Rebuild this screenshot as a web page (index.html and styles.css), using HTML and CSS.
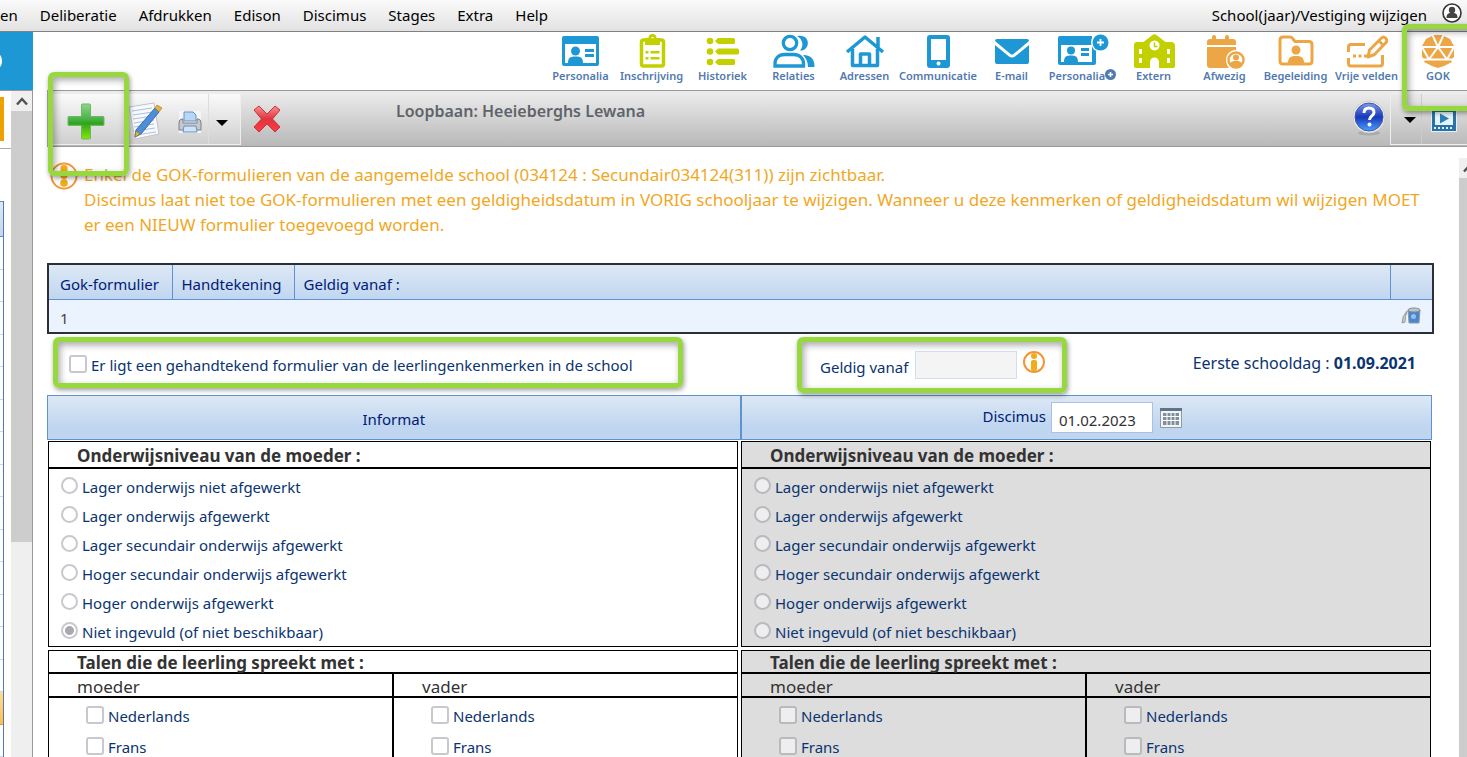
FILE: index.html
```html
<!DOCTYPE html>
<html lang="nl">
<head>
  <meta charset="UTF-8" />
  <meta name="viewport" content="width=device-width, initial-scale=1.0" />
  <title>Loopbaan - GOK</title>
  <link rel="stylesheet" href="styles.css">
</head>
<body>
  <header class="menubar">
    <nav class="menu">
      <a href="#">en</a>
      <a href="#">Deliberatie</a>
      <a href="#">Afdrukken</a>
      <a href="#">Edison</a>
      <a href="#">Discimus</a>
      <a href="#">Stages</a>
      <a href="#">Extra</a>
      <a href="#">Help</a>
    </nav>
    <a href="#" class="school">School(jaar)/Vestiging wijzigen</a>
    <a href="#" class="user" aria-label="Gebruiker">
      <svg width="22" height="22" viewBox="0 0 22 22"><circle cx="11" cy="11" r="9" fill="#fff" stroke="#333" stroke-width="1.6"/><circle cx="11" cy="8" r="3.2" fill="#444"/><path d="M5.5 16c0-5 2.500-5 5.500-5s5.500 0 5.500 5z" fill="#444"/></svg>
    </a>
  </header>

  <div class="app">
    <aside class="side">
      <div class="side-head"><svg width="4" height="16" viewBox="0 0 4 16"><ellipse cx="-2" cy="8" rx="4" ry="7" fill="#fff"/></svg></div>
      <div class="side-body">
        <div class="side-list">
          <div class="side-top"><div class="side-tag"></div></div>
          <div class="rows">
            <div class="row head"></div>
            <div class="row"></div><div class="row"></div><div class="row"></div><div class="row"></div>
            <div class="row"></div><div class="row"></div><div class="row"></div><div class="row"></div>
            <div class="row"></div><div class="row"></div><div class="row"></div><div class="row"></div>
            <div class="row"></div><div class="row"></div>
            <div class="row selected"></div>
            <div class="row"></div>
          </div>
        </div>
        <div class="scroll">
          <div class="scroll-up"><svg width="12" height="9" viewBox="0 0 12 9"><path d="M1 7.500L6 2l5 5.500" fill="none" stroke="#505050" stroke-width="2.400"/></svg></div>
          <div class="scroll-thumb"></div>
        </div>
      </div>
    </aside>

    <main class="main">
      <nav class="tabs">
        <a href="#" class="tab blue">
          <svg width="42" height="36" viewBox="0 0 42 36"><path fill="currentColor" fill-rule="evenodd" d="M4 3h33a2 2 0 0 1 2 2v26a2 2 0 0 1-2 2H4a2 2 0 0 1-2-2V5a2 2 0 0 1 2-2zM5 11v19h31V11z"/><circle cx="15.500" cy="18" r="4.500" fill="currentColor"/><path fill="currentColor" d="M8 30c0-6 3-6.500 7.500-6.500S23 24 23 30zM25 16h9v3h-9zM25 21h9v3h-9z"/></svg>
          <span>Personalia</span></a>
        <a href="#" class="tab lime">
          <svg width="42" height="36" viewBox="0 0 42 36"><rect x="10.500" y="7" width="22" height="26" rx="2" fill="none" stroke="currentColor" stroke-width="3.500"/><path fill="currentColor" fill-rule="evenodd" d="M14 5h3.500a4 4 0 0 1 8 0H29v7H14zM21.500 4a1.500 1.500 0 1 0 .1 0z"/><path fill="currentColor" d="M14.500 18h3v2.500h-3zM19.500 18h9v2.500h-9zM14.500 24h3v2.500h-3zM19.500 24h9v2.500h-9z"/></svg>
          <span>Inschrijving</span></a>
        <a href="#" class="tab lime">
          <svg width="42" height="36" viewBox="0 0 42 36"><g fill="currentColor"><circle cx="8" cy="8" r="3.300"/><circle cx="8" cy="18.500" r="3.300"/><circle cx="8" cy="29" r="3.300"/><path d="M16 5h15.500a1.500 1.500 0 0 1 1.500 1.500v3a1.500 1.500 0 0 1-1.500 1.500H16l-3-3zM16 15.500h19.500a1.500 1.500 0 0 1 1.500 1.500v3a1.500 1.500 0 0 1-1.500 1.500H16l-3-3zM16 26h15.500a1.500 1.500 0 0 1 1.500 1.500v3a1.500 1.500 0 0 1-1.500 1.500H16l-3-3z"/></g></svg>
          <span>Historiek</span></a>
        <a href="#" class="tab blue">
          <svg width="42" height="36" viewBox="0 0 42 36"><path fill="currentColor" d="M24 3c14-3 14 15 3 14.500 4-4.500 3-11-3-14.500zM30 22c9 0 11.500 5 11.500 12H35c0-5-2-9-5-12z"/><g fill="none" stroke="currentColor" stroke-width="3.300"><circle cx="17" cy="10" r="6.700"/><path d="M2 33v-2c0-6 4-9.500 9.500-9.500h9c6 0 10 3.500 10 9.500v2z"/></g></svg>
          <span>Relaties</span></a>
        <a href="#" class="tab blue">
          <svg width="42" height="36" viewBox="0 0 42 36"><g fill="none" stroke="currentColor" stroke-width="3.500" stroke-linejoin="round"><path d="M3 19L21 4l18 15M34 14V4"/><path d="M8.500 16v16.500h25V16M16.500 32V21h9v11"/></g></svg>
          <span>Adressen</span></a>
        <a href="#" class="tab wide blue">
          <svg width="42" height="36" viewBox="0 0 42 36"><path fill="currentColor" fill-rule="evenodd" d="M13 2h17a3 3 0 0 1 3 3v27a3 3 0 0 1-3 3H13a3 3 0 0 1-3-3V5a3 3 0 0 1 3-3zm1 4v21h15V6zm7.500 22.500a2 2 0 1 0 .1 0z"/></svg>
          <span>Communicatie</span></a>
        <a href="#" class="tab blue">
          <svg width="42" height="36" viewBox="0 0 42 36"><path fill="currentColor" d="M6 6h30a2 2 0 0 1 2 2L22.500 21q-1.500 1-3 0L4 8a2 2 0 0 1 2-2zM4 12l14 11.500q3 2 6 0L38 12v17a2 2 0 0 1-2 2H6a2 2 0 0 1-2-2z"/></svg>
          <span>E-mail</span></a>
        <a href="#" class="tab blue">
          <svg width="52" height="36" viewBox="0 0 52 36"><path fill="currentColor" fill-rule="evenodd" d="M3 3h32v8h4v19a2 2 0 0 1-2 2H3a2 2 0 0 1-2-2V5a2 2 0 0 1 2-2zM4 12v17h31V12z"/><circle cx="14" cy="17.500" r="4" fill="currentColor"/><path fill="currentColor" d="M7 29c0-6 3-6.500 7-6.500s7 .5 7 6.500zM24 15h8v3h-8zM24 20h8v3h-8z"/><circle cx="43.500" cy="9.500" r="9.500" fill="#fff"/><circle cx="43.500" cy="9.500" r="8" fill="currentColor"/><path d="M43.500 6v7M40 9.500h7" stroke="#fff" stroke-width="1.800"/></svg>
          <span>Personalia<svg class="sup" width="11" height="11" viewBox="0 0 11 11"><circle cx="5.500" cy="5.500" r="5.500" fill="#5279b0"/><path d="M5.500 3v5M3 5.500h5" stroke="#fff" stroke-width="1.500"/></svg></span></a>
        <a href="#" class="tab lime">
          <svg width="42" height="36" viewBox="0 0 42 36"><path fill="currentColor" fill-rule="evenodd" d="M4 9h6.500l9-7q2-1.500 4 0l9 7H38q4 0 4 4v20q0 2-2 2H26v-6a4.500 4.500 0 0 0-9 0v6H3q-2 0-2-2V12q0-3 3-3zM6 16v5h3v-5zm0 9v5h3v-5zm28-9v5h3v-5zm0 9v5h3v-5zM21.500 7.500a5 5 0 1 0 .1 0z"/><path d="M21.500 9.500v4h3" stroke="currentColor" stroke-width="1.500" fill="none"/></svg>
          <span>Extern</span></a>
        <a href="#" class="tab orange">
          <svg width="42" height="36" viewBox="0 0 42 36"><path fill="currentColor" d="M3 9q0-3 3-3h2V4q0-2 2-2t2 2v2h9V4q0-2 2-2t2 2v2h4q3 0 3 3v3H3zM3 14h29v3c-9 0-13 10-7 18H6q-3 0-3-3z"/><circle cx="32" cy="27" r="7.500" fill="#fff" stroke="currentColor" stroke-width="2.500"/><circle cx="32" cy="24.500" r="3" fill="currentColor"/><path fill="currentColor" d="M26 31c1-3 3-3 6-3s5 0 6 3c-4 4-8 4-12 0z"/></svg>
          <span>Afwezig</span></a>
        <a href="#" class="tab orange">
          <svg width="42" height="36" viewBox="0 0 42 36"><path fill="none" stroke="currentColor" stroke-width="3" stroke-linejoin="round" d="M8 4h7q2 0 3 2l2 2.500h14q3 0 3 3V28q0 3-3 3H8q-3 0-3-3V7q0-3 3-3z"/><circle cx="21" cy="17" r="4.500" fill="currentColor"/><path fill="currentColor" d="M13 30c0-6 3-7 8-7s8 1 8 7z"/></svg>
          <span>Begeleiding</span></a>
        <a href="#" class="tab orange">
          <svg width="42" height="36" viewBox="0 0 42 36"><g fill="none" stroke="currentColor" stroke-width="3" stroke-linejoin="round"><path d="M19 11.500H5q-2.500 0-2.500 2.500v5M2.500 25v5.500q0 2.500 2.500 2.500h29q2.500 0 2.500-2.500V22M22 24l1.500-7L35.500 5q2-2 4 0 2.500 2.500.5 4.500L28.500 21.500zM33 8l4 4"/></g><path fill="currentColor" d="M7 21.500h3v3H7zM12.500 21.500h3v3h-3zM18 21.500h3v3h-3z"/></svg>
          <span>Vrije velden</span></a>
        <a href="#" class="tab last orange">
          <svg width="42" height="36" viewBox="0 0 42 36"><path fill="currentColor" d="M17 2h8l8 4 4 7v11l-3 3 1 2-8 4-6 2-6-2-8-4 1-2-3-3V13l4-7z"/><path fill="none" stroke="#fff" stroke-width="2" d="M4 14h34M21 14l-9 12.500h18zM21 14L15 1M21 14l6-13M12 26.500L5 14M30 26.500L37 14M3 26.500h36"/></svg>
          <span>GOK</span><i class="mark mark-gok"></i></a>
      </nav>

      <div class="toolbar">
        <div class="group">
          <button class="tool add" aria-label="Toevoegen"><svg width="38" height="37" viewBox="0 0 38 37"><defs><linearGradient id="green" x1="0" y1="0" x2="0" y2="1"><stop offset="0" stop-color="#8fd48a"/><stop offset=".45" stop-color="#45b043"/><stop offset=".55" stop-color="#2fa51c"/><stop offset="1" stop-color="#86e60a"/></linearGradient></defs><path d="M15.500 1h7q1 0 1 1v11.500H36q1 0 1 1v7q0 1-1 1H23.500V35q0 1-1 1h-7q-1 0-1-1V22.500H2q-1 0-1-1v-7q0-1 1-1h12.500V2q0-1 1-1z" fill="url(#green)" stroke="#6cb763"/></svg><i class="mark mark-add"></i></button>
          <button class="tool edit" aria-label="Bewerken"><svg width="36" height="40" viewBox="0 0 36 40"><path d="M2 6l25-4 5 31-24 5z" fill="#f8f9fb" stroke="#c0c4cc"/><path d="M5 10l20-3M6 14l20-3M6 18l20-3M7 22l20-3M7 26l20-3M8 30l20-3M9 34l20-3" stroke="#a9c0df"/><path d="M28 7l4 4-18 22-6 3 1-7z" fill="#4c8ed8" stroke="#3a6caa"/><path d="M28 7l2-3 5 3-3 4zM9 30l4 3-5 3z" fill="#e7b23c" stroke="#98762b" stroke-width=".6"/></svg></button>
          <button class="tool print" aria-label="Afdrukken"><svg width="24" height="22" viewBox="0 0 24 22"><path d="M1 0h22v22H1z" fill="#f2f6fa"/><path d="M6 10V1h9l3 3v6z" fill="#b8d6f5" stroke="#7191b8"/><path d="M1 12q0-4 3-4h1v4h14V8h1q3 0 3 4v7H1z" fill="#c4c8ce" stroke="#7b818a"/><path d="M6 15h12l1 6H5z" fill="#cfe3f8" stroke="#6f90b8"/></svg></button>
          <button class="tool arrow" aria-label="Afdrukopties"><svg width="12" height="6" viewBox="0 0 12 6"><path d="M0 0h12L6 6z"/></svg></button>
        </div>
        <button class="tool delete" aria-label="Verwijderen"><svg width="28" height="28" viewBox="0 0 28 28"><defs><linearGradient id="red" x1="0" y1="0" x2="0" y2="1"><stop offset="0" stop-color="#f89090"/><stop offset=".5" stop-color="#e0353c"/><stop offset="1" stop-color="#ff3b45"/></linearGradient></defs><path d="M6 1l8 8 8-8 5 4-7.500 9 7.500 8-5 5-8-8-8 8-5-5 7.500-8L1 5z" fill="url(#red)" stroke="#c8323a" stroke-linejoin="round"/></svg></button>
        <h1 class="title">Loopbaan: Heeieberghs Lewana</h1>
        <button class="tool help" aria-label="Help"><svg width="34" height="36" viewBox="0 0 34 36"><defs><linearGradient id="ball" x1="0" y1="0" x2="0" y2="1"><stop offset="0" stop-color="#7e9aec"/><stop offset=".5" stop-color="#1739b8"/><stop offset="1" stop-color="#4aa0ff"/></linearGradient></defs><ellipse cx="17" cy="33" rx="11" ry="2.500" fill="#aaa"/><circle cx="17" cy="17" r="16" fill="#eee" stroke="#ccc"/><circle cx="17" cy="17" r="14" fill="url(#ball)" stroke="#3c57b0"/><path d="M12 13q0-5 5-5t5 4.500c0 3.500-4.500 3.500-4.500 7.500" fill="none" stroke="#fff" stroke-width="3"/><circle cx="17.500" cy="24.500" r="2" fill="#fff"/></svg></button>
        <div class="group right">
          <button class="tool arrow" aria-label="Meer"><svg width="12" height="6" viewBox="0 0 12 6"><path d="M0 0h12L6 6z"/></svg></button>
          <button class="tool film" aria-label="Video"><svg width="26" height="26" viewBox="0 0 26 26"><path d="M0 0h26v26H0z" fill="#dff1fa"/><path d="M1 1h24v24H1z" fill="#2b73a5"/><path d="M4 6h18v13H4z" fill="#e6f5fc"/><path d="M3 3.500h20M3 22h20" stroke="#dff1fa" stroke-width="2" stroke-dasharray="2 2"/><path d="M9 7.500l9 5-9 5z" fill="#2b7fb5"/></svg></button>
        </div>
      </div>

      <div class="body">
        <div class="content">
          <div class="notice">
            <svg width="28" height="28" viewBox="0 0 28 28"><circle cx="14" cy="14" r="12.500" fill="none" stroke="#f2953a" stroke-width="2"/><rect x="10.500" y="3" width="7" height="14" rx="3" fill="#f2ac18"/><circle cx="14" cy="21" r="3.800" fill="#f2ac18"/></svg>
            <p>Enkel de GOK-formulieren van de aangemelde school (034124 : Secundair034124(311)) zijn zichtbaar.<br>
            Discimus laat niet toe GOK-formulieren met een geldigheidsdatum in VORIG schooljaar te wijzigen. Wanneer u deze kenmerken of geldigheidsdatum wil wijzigen MOET er een NIEUW formulier toegevoegd worden.</p>
          </div>

          <table class="forms">
            <thead>
              <tr><th class="c1">Gok-formulier</th><th class="c2">Handtekening</th><th>Geldig vanaf :</th><th class="c4"></th></tr>
            </thead>
            <tbody>
              <tr><td>1</td><td></td><td></td><td class="trash"><button class="tool" aria-label="Wissen"><svg width="20" height="20" viewBox="0 0 20 20"><path d="M7 4h12l-1 13H8z" fill="#4c86c9" stroke="#8d9cab"/><ellipse cx="13" cy="4" rx="6" ry="2" fill="#bfc5ca" stroke="#858c93"/><circle cx="12.500" cy="10.500" r="2.500" fill="#8fc0f2"/><path d="M6 5Q1 10 1 17l3-1q0-6 2-11z" fill="#ccc" stroke="#999"/></svg></button></td></tr>
            </tbody>
          </table>

          <div class="options">
            <div class="framed signed">
              <label class="check"><input type="checkbox"> Er ligt een gehandtekend formulier van de leerlingenkenmerken in de school</label>
            </div>
            <div class="framed valid">
              <label for="geldig">Geldig vanaf</label>
              <input type="text" id="geldig" class="date off" disabled>
              <svg width="24" height="24" viewBox="0 0 24 24"><circle cx="12" cy="12" r="10" fill="none" stroke="#f2953a" stroke-width="2"/><circle cx="12" cy="6" r="3" fill="#f2ac18"/><rect x="9" y="10" width="6" height="11" rx="2" fill="#f2ac18"/></svg>
            </div>
            <p class="first-day">Eerste schooldag : <b>01.09.2021</b></p>
          </div>

          <div class="sources">
            <div class="source">Informat</div>
            <div class="source">
              <label for="discimus">Discimus</label>
              <input type="text" id="discimus" class="date" value="01.02.2023">
              <button class="tool" aria-label="Kalender"><svg width="22" height="22" viewBox="0 0 22 22"><path d="M.5 1.500h21v19H.5z" fill="#f2f5f7" stroke="#8c9aa5"/><path d="M0 1h22v3H0z" fill="#5f7582"/><path d="M3 6h16v12H3z" fill="#7f909d"/><path d="M3 9.500h16M3 13.500h16M7 6v12M11 6v12M15 6v12" stroke="#fff"/></svg></button>
            </div>
          </div>

          <div class="columns">
            <div class="column">
              <section class="panel level">
                <h2>Onderwijsniveau van de moeder :</h2>
                <div class="radios">
                  <label><input type="radio" name="niveau1"> Lager onderwijs niet afgewerkt</label>
                  <label><input type="radio" name="niveau1"> Lager onderwijs afgewerkt</label>
                  <label><input type="radio" name="niveau1"> Lager secundair onderwijs afgewerkt</label>
                  <label><input type="radio" name="niveau1"> Hoger secundair onderwijs afgewerkt</label>
                  <label><input type="radio" name="niveau1"> Hoger onderwijs afgewerkt</label>
                  <label><input type="radio" name="niveau1" checked> Niet ingevuld (of niet beschikbaar)</label>
                </div>
              </section>
              <section class="panel langs">
                <h2>Talen die de leerling spreekt met :</h2>
                <div class="parents">
                  <div class="parent">
                    <h3>moeder</h3>
                    <label class="check"><input type="checkbox"> Nederlands</label>
                    <label class="check"><input type="checkbox"> Frans</label>
                  </div>
                  <div class="parent">
                    <h3>vader</h3>
                    <label class="check"><input type="checkbox"> Nederlands</label>
                    <label class="check"><input type="checkbox"> Frans</label>
                  </div>
                </div>
              </section>
            </div>
            <div class="column readonly">
              <section class="panel level">
                <h2>Onderwijsniveau van de moeder :</h2>
                <div class="radios">
                  <label><input type="radio" name="niveau2" disabled> Lager onderwijs niet afgewerkt</label>
                  <label><input type="radio" name="niveau2" disabled> Lager onderwijs afgewerkt</label>
                  <label><input type="radio" name="niveau2" disabled> Lager secundair onderwijs afgewerkt</label>
                  <label><input type="radio" name="niveau2" disabled> Hoger secundair onderwijs afgewerkt</label>
                  <label><input type="radio" name="niveau2" disabled> Hoger onderwijs afgewerkt</label>
                  <label><input type="radio" name="niveau2" disabled> Niet ingevuld (of niet beschikbaar)</label>
                </div>
              </section>
              <section class="panel langs">
                <h2>Talen die de leerling spreekt met :</h2>
                <div class="parents">
                  <div class="parent">
                    <h3>moeder</h3>
                    <label class="check"><input type="checkbox" disabled> Nederlands</label>
                    <label class="check"><input type="checkbox" disabled> Frans</label>
                  </div>
                  <div class="parent">
                    <h3>vader</h3>
                    <label class="check"><input type="checkbox" disabled> Nederlands</label>
                    <label class="check"><input type="checkbox" disabled> Frans</label>
                  </div>
                </div>
              </section>
            </div>
          </div>
        </div>
        <div class="scroll thin">
          <div class="scroll-up"><svg width="12" height="9" viewBox="0 0 12 9"><path d="M1 7.500L6 2l5 5.500" fill="none" stroke="#505050" stroke-width="2.400"/></svg></div>
          <div class="scroll-thumb"></div>
        </div>
      </div>
    </main>
  </div>
</body>
</html>
```

FILE: styles.css
```css
* {
  box-sizing: border-box;
}
body {
  margin: 0;
  height: 100vh;
  overflow: hidden;
  display: flex;
  flex-direction: column;
  background: #fff;
  color: #0a3470;
  font-family: "Noto Sans", "Open Sans", sans-serif;
  font-size: 15px;
}
a {
  color: inherit;
  text-decoration: none;
}
h1, h2, h3, p {
  margin: 0;
}
svg {
  display: block;
  flex: none;
}
button {
  font: inherit;
  padding: 0;
  border: none;
  background: none;
  cursor: pointer;
}

/* menu */
.menubar {
  display: flex;
  align-items: center;
  height: 32px;
  flex: none;
  padding: 0 4px 2px 0;
  color: #000;
  background: linear-gradient(#fafafa, #e2e2e2);
  border-bottom: 1px solid #808080;
}
.menu {
  display: flex;
  gap: 22px;
  flex: 1;
}
.user {
  margin-left: 14px;
  margin-bottom: 4px;
}

.app {
  flex: 1;
  min-height: 0;
  display: flex;
}

/* left list */
.side {
  width: 33px;
  flex: none;
  display: flex;
  flex-direction: column;
}
.side-head {
  height: 58px;
  padding-top: 21px;
  background: #1e98d4;
}
.side-body {
  flex: 1;
  min-height: 0;
  display: flex;
  border-top: 1px solid #999;
  border-right: 1px solid #999;
}
.side-list {
  flex: 1;
  overflow: hidden;
}
.side-top {
  height: 58px;
  padding-top: 6px;
  border-bottom: 1px solid #aaa;
}
.side-tag {
  width: 4px;
  height: 44px;
  background: #eda200;
}
.rows {
  width: 4px;
  margin-top: 52px;
  border-right: 1px solid #5279b0;
}
.row {
  height: 32px;
  border-bottom: 1px solid #cfd5dc;
}
.row:nth-child(even) {
  height: 33px;
}
.row.head {
  height: 36px;
  border-top: 1px solid #5f8cc5;
  border-bottom-color: #5f8cc5;
  background: linear-gradient(#dde8f5, #c0d6f0);
}
.row.selected {
  background: linear-gradient(#ffdc92, #ffc04d);
  border-bottom-color: #f09030;
}
.scroll {
  width: 21px;
  background: #efefef;
}
.scroll-up {
  height: 20px;
  display: flex;
  align-items: center;
  justify-content: center;
}
.scroll-thumb {
  height: 431px;
  background: #cdcdcd;
}
.scroll.thin {
  width: 8px;
  margin-top: 11px;
  overflow: hidden;
}
.scroll.thin .scroll-up {
  justify-content: flex-start;
  padding-left: 4px;
}
.scroll.thin .scroll-thumb {
  height: 100%;
}

/* icon tabs */
.main {
  flex: 1;
  min-width: 0;
  display: flex;
  flex-direction: column;
  padding-left: 14px;
}
.tabs {
  display: flex;
  justify-content: flex-end;
  height: 58px;
  flex: none;
}
.tab {
  width: 71px;
  display: flex;
  flex-direction: column;
  align-items: center;
  padding-top: 1px;
  position: relative;
  white-space: nowrap;
}
.tab.wide {
  width: 76px;
}
.tab.last {
  width: 58px;
  margin-left: 7px;
}
.tab span {
  display: flex;
  color: #5279b0;
  font-size: 11px;
  line-height: 13px;
  font-weight: 600;
}
.blue {
  color: #1e98d4;
}
.lime {
  color: #c2d000;
}
.orange {
  color: #eca646;
}

/* green frames */
.mark,
.framed {
  border: 5px solid #96d83e;
  border-radius: 6px;
  box-shadow: 1px 2px 5px rgba(0, 0, 0, 0.4), inset 2px 3px 7px rgba(0, 0, 0, 0.35);
}
.mark {
  position: absolute;
  z-index: 2;
  pointer-events: none;
}
.mark-add {
  top: -22px;
  left: -5px;
  width: 81px;
  height: 104px;
}
.mark-gok {
  top: -8px;
  left: -7px;
  width: 80px;
  height: 87px;
}

/* toolbar */
.toolbar {
  height: 57px;
  flex: none;
  display: flex;
  align-items: center;
  padding-left: 4px;
  border-top: 1px solid #999;
  border-bottom: 1px solid #999;
  border-left: 1px solid #aaa;
  background: linear-gradient(#ededed, #b8b8b8);
}
.group {
  display: flex;
  align-items: center;
  height: 52px;
  border: 1px solid #eee;
  background: linear-gradient(#fafafa, #cfcfcf);
}
.group.right {
  width: 77px;
  border-right: none;
  background: none;
}
.tool {
  display: flex;
  align-items: center;
  justify-content: center;
  height: 50px;
}
.add {
  position: relative;
  width: 65px;
  padding-top: 6px;
}
.edit {
  width: 54px;
  padding-top: 4px;
}
.print {
  width: 36px;
  padding-top: 6px;
}
.arrow {
  width: 32px;
  padding: 8px 6px 0 0;
  border-left: 1px solid #ddd;
}
.right .arrow {
  width: 31px;
  padding: 2px 0 0 8px;
  border-left: none;
  border-right: 1px solid #ccc;
}
.film {
  width: 44px;
}
.delete {
  width: 52px;
}
.title {
  flex: 1;
  padding: 0 0 16px 103px;
  color: #5f646b;
  font-size: 16px;
  font-weight: 600;
}
.help {
  width: 42px;
  padding-bottom: 2px;
}

/* content */
.body {
  flex: 1;
  min-height: 0;
  display: flex;
}
.content {
  flex: 1;
  min-width: 0;
  padding: 15px 25px 0 0;
}
.notice {
  display: flex;
  gap: 6px;
  padding-left: 3px;
  color: #f0a81f;
  font-size: 17px;
  line-height: 25px;
}
.notice p {
  margin-right: -4px;
}
.forms {
  width: 100%;
  margin-top: 26px;
  border-collapse: collapse;
  border: 2px solid #2b3038;
  color: #001a75;
}
.forms th {
  height: 35px;
  padding: 4px 9px 0;
  text-align: left;
  font-weight: 400;
  background: linear-gradient(#dde8f5, #c0d6f0);
  border: 1px solid #5f93d0;
  border-top: none;
}
.forms td {
  height: 34px;
  padding: 4px 11px 0;
  color: #444;
  background: #ebf3ff;
}
.forms th:first-child {
  padding-left: 11px;
}
.forms .trash {
  padding-top: 0;
}
.trash .tool {
  height: 20px;
}
.c1 {
  width: 124px;
}
.c2 {
  width: 122px;
}
.c4 {
  width: 42px;
}

.options {
  display: flex;
  align-items: flex-start;
  height: 61px;
  padding: 3px 18px 0 6px;
}
.framed {
  display: flex;
  align-items: center;
}
.signed {
  width: 630px;
  height: 51px;
  padding: 4px 11px 0;
}
.valid {
  width: 270px;
  height: 56px;
  margin-left: 114px;
  gap: 5px;
  padding-left: 18px;
}
.valid label {
  padding: 3px 2px 0 0;
}
.valid svg {
  margin-bottom: 6px;
}
.first-day {
  flex: 1;
  text-align: right;
  padding-top: 15px;
  font-size: 16px;
  line-height: 22px;
}
.check {
  display: flex;
  align-items: center;
  gap: 4px;
}
input[type="checkbox"],
input[type="radio"] {
  appearance: none;
  flex: none;
  width: 18px;
  height: 18px;
  margin: 0 0 2px;
  border: 2px solid #c8c8ce;
  border-radius: 3px;
  background: #fff;
}
input[type="radio"] {
  width: 17px;
  height: 17px;
  border-radius: 50%;
}
input[type="radio"]:checked {
  background: radial-gradient(#a9a9b2 4px, #fff 5px);
}
.readonly input {
  background: #eee;
  border-color: #b9b9c0;
}
.date {
  width: 102px;
  height: 31px;
  padding: 4px 7px 0;
  border: 1px solid #a9c2e4;
  border-radius: 0;
  background: #fff;
  color: #333;
  font: inherit;
}
.date.off {
  height: 28px;
  background: #f4f4f4;
  border-color: #cfdef0;
}

.sources {
  display: grid;
  grid-template-columns: 1fr 1fr;
  height: 45px;
  margin-right: 2px;
  color: #001a75;
  background: linear-gradient(#dde8f5, #c0d6f0 70%);
  border: 1px solid #5f93d0;
}
.source {
  display: flex;
  align-items: center;
  justify-content: center;
  gap: 5px;
  padding-top: 3px;
}
.source + .source {
  padding: 0 8px 0 0;
  border-left: 2px solid #5f93d0;
}
.source label {
  padding-bottom: 4px;
}
.source .tool {
  height: 40px;
  margin-left: 2px;
}

.columns {
  display: flex;
  gap: 3px;
  margin: 1px 3px 0 1px;
  color: #0a3470;
}
.column {
  flex: 1;
  display: flex;
  flex-direction: column;
  gap: 3px;
}
.panel {
  border: 1px solid #000;
}
.readonly .panel {
  background: #ddd;
}
.panel h2 {
  height: 27px;
  padding-left: 28px;
  border-bottom: 2px solid #000;
  color: #333;
  font-size: 17px;
  line-height: 28px;
  font-weight: 700;
}
.langs h2 {
  height: 23px;
  line-height: 24px;
}
.radios {
  display: grid;
  grid-auto-rows: 29px;
  padding: 3px 12px 0;
}
.radios label {
  display: flex;
  align-items: center;
  gap: 4px;
}
.parents {
  display: flex;
}
.parent {
  flex: 1;
  height: 120px;
}
.parent + .parent {
  border-left: 2px solid #000;
}
.parent h3 {
  height: 24px;
  margin-bottom: 2px;
  padding-left: 28px;
  border-bottom: 2px solid #000;
  color: #333;
  font-size: 17px;
  line-height: 25px;
  font-weight: 400;
}
.parent .check {
  height: 31px;
  padding-left: 37px;
}
```
